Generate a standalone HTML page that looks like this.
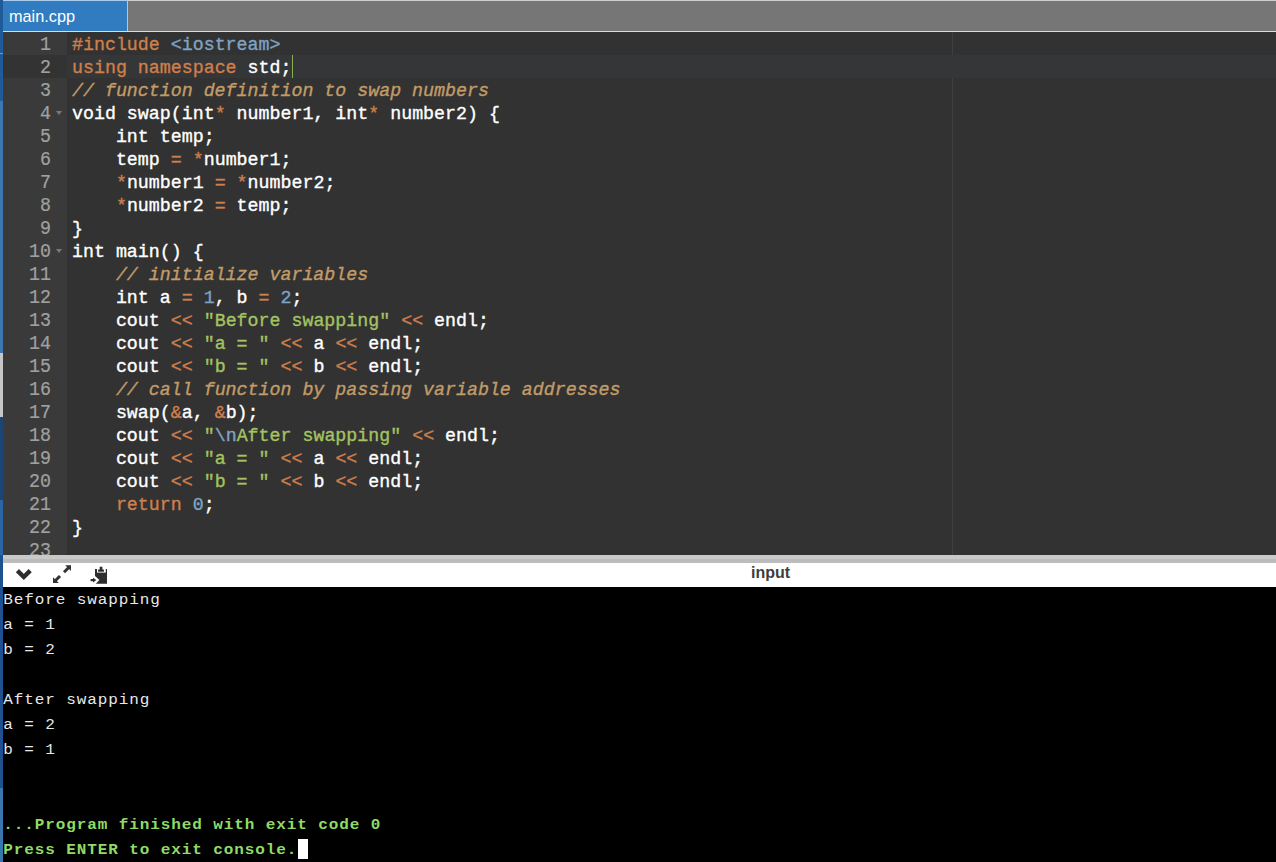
<!DOCTYPE html>
<html><head><meta charset="utf-8"><style>
*{margin:0;padding:0;box-sizing:border-box}
html,body{width:1276px;height:862px;overflow:hidden;background:#000}
body{position:relative;font-family:"Liberation Sans",sans-serif}
#strip{position:absolute;left:0;top:0;width:3px;height:862px;background:linear-gradient(to bottom,#1e5b98 0,#1e5b98 53px,#6a9ccc 53px,#6a9ccc 54px,#1e5b98 54px,#1e5b98 101px,#3c78af 101px,#3c78af 353px,#c6c6c6 353px,#c6c6c6 417px,#1b4674 417px,#1b4674 500px,#2a66a4 500px,#2a66a4 555px,#1f5090 555px,#1f5090 788px,#3a76ae 788px,#3a76ae 862px)}
#topbar{position:absolute;left:3px;top:0;width:1273px;height:32px;background:#767676}
#tline{position:absolute;left:0;top:0;width:1273px;height:1px;background:#cfcfcf}
#bline{position:absolute;left:0;top:31px;width:1273px;height:1px;background:#dcdcdc}
#tab{position:absolute;left:0;top:0;width:124px;height:31px;background:#317bc0;color:#fff;font-size:16.3px;line-height:31px;padding-left:6px;border-top:1px solid #a9cdee}
#tabr{position:absolute;left:124px;top:0;width:1px;height:31px;background:#b9c6d2}
#editor{position:absolute;left:3px;top:32px;width:1273px;height:523px;background:#323232;overflow:hidden}
#gutter{position:absolute;left:0;top:0;width:64px;height:523px;background:#3a3a3a}
.gl{position:absolute;left:0;-webkit-text-stroke:0.2px;transform:scaleY(1.09);transform-origin:0 15.5px;width:64px;height:23px;line-height:23px;text-align:right;padding-right:16px;color:#a0a0a0;font-family:"Liberation Mono",monospace;font-size:18.3px}
.cl{position:absolute;left:69px;-webkit-text-stroke:0.35px;transform:scaleY(1.05);transform-origin:0 15.5px;height:23px;line-height:23px;white-space:pre;color:#fff;font-family:"Liberation Mono",monospace;font-size:18.3px}
.tx{position:absolute;left:0;top:2px;width:1273px;height:523px}
#margin{position:absolute;left:949px;top:0;width:1px;height:523px;background:#3f3f3f}
.active{position:absolute;left:64px;top:23px;width:1209px;height:23px;background:#353637}
.gactive{position:absolute;left:0;top:23px;width:64px;height:23px;background:#333333}
.fold{position:absolute;left:53px;width:0;height:0;border-left:3.5px solid transparent;border-right:3.5px solid transparent;border-top:4px solid #7a7a7a}
#cursor{position:absolute;left:289px;top:23px;width:1px;height:23px;background:#88b050}
.k{color:#cf7f4c}.s{color:#a5c261}.c{color:#c29c68;font-style:italic}.n{color:#7fa3c3}
#split{position:absolute;left:3px;top:555px;width:1273px;height:8px;background:linear-gradient(#c9c9c9 0,#c9c9c9 4px,#bcbcbc 4px)}
#tools{position:absolute;left:3px;top:563px;width:1273px;height:24px;background:#fff}
#inlabel{position:absolute;left:748px;top:-2px;height:24px;line-height:24px;font-weight:bold;font-size:16px;color:#3d3d3d}
#console{position:absolute;left:3px;top:587px;padding-top:1px;width:1273px;height:275px;background:#000;font-family:"Liberation Mono",monospace;font-size:16px;letter-spacing:0.9px;color:#e8e8e8}
.ol{position:absolute;left:0.3px;margin-top:1px;transform:scaleY(0.92);transform-origin:0 16px;height:25px;line-height:25px;white-space:pre}
.g{color:#8fdb66;font-weight:bold}
svg{position:absolute}
</style></head><body>
<div id="strip"></div>
<div id="topbar"><div id="tline"></div><div id="tab">main.cpp</div><div id="tabr"></div><div id="bline"></div></div>
<div id="editor">
<div id="gutter"></div>
<div id="margin"></div>
<div class="gactive"></div>
<div class="active"></div>
<div class="fold" style="top:79px"></div>
<div class="fold" style="top:217px"></div>
<div id="cursor"></div>
<div class="tx">
<div class="gl" style="top:0px">1</div>
<div class="gl" style="top:23px">2</div>
<div class="gl" style="top:46px">3</div>
<div class="gl" style="top:69px">4</div>
<div class="gl" style="top:92px">5</div>
<div class="gl" style="top:115px">6</div>
<div class="gl" style="top:138px">7</div>
<div class="gl" style="top:161px">8</div>
<div class="gl" style="top:184px">9</div>
<div class="gl" style="top:207px">10</div>
<div class="gl" style="top:230px">11</div>
<div class="gl" style="top:253px">12</div>
<div class="gl" style="top:276px">13</div>
<div class="gl" style="top:299px">14</div>
<div class="gl" style="top:322px">15</div>
<div class="gl" style="top:345px">16</div>
<div class="gl" style="top:368px">17</div>
<div class="gl" style="top:391px">18</div>
<div class="gl" style="top:414px">19</div>
<div class="gl" style="top:437px">20</div>
<div class="gl" style="top:460px">21</div>
<div class="gl" style="top:483px">22</div>
<div class="gl" style="top:506px">23</div>
<div class="cl" style="top:0px"><span class="k">#include</span> <span class="n">&lt;iostream&gt;</span></div>
<div class="cl" style="top:23px"><span class="k">using</span> <span class="k">namespace</span> std;</div>
<div class="cl" style="top:46px"><span class="c">// function definition to swap numbers</span></div>
<div class="cl" style="top:69px">void swap(int<span class="k">*</span> number1, int<span class="k">*</span> number2) {</div>
<div class="cl" style="top:92px">    int temp;</div>
<div class="cl" style="top:115px">    temp <span class="k">=</span> <span class="k">*</span>number1;</div>
<div class="cl" style="top:138px">    <span class="k">*</span>number1 <span class="k">=</span> <span class="k">*</span>number2;</div>
<div class="cl" style="top:161px">    <span class="k">*</span>number2 <span class="k">=</span> temp;</div>
<div class="cl" style="top:184px">}</div>
<div class="cl" style="top:207px">int main() {</div>
<div class="cl" style="top:230px">    <span class="c">// initialize variables</span></div>
<div class="cl" style="top:253px">    int a <span class="k">=</span> <span class="n">1</span>, b <span class="k">=</span> <span class="n">2</span>;</div>
<div class="cl" style="top:276px">    cout <span class="k">&lt;&lt;</span> <span class="s">"Before swapping"</span> <span class="k">&lt;&lt;</span> endl;</div>
<div class="cl" style="top:299px">    cout <span class="k">&lt;&lt;</span> <span class="s">"a = "</span> <span class="k">&lt;&lt;</span> a <span class="k">&lt;&lt;</span> endl;</div>
<div class="cl" style="top:322px">    cout <span class="k">&lt;&lt;</span> <span class="s">"b = "</span> <span class="k">&lt;&lt;</span> b <span class="k">&lt;&lt;</span> endl;</div>
<div class="cl" style="top:345px">    <span class="c">// call function by passing variable addresses</span></div>
<div class="cl" style="top:368px">    swap(<span class="k">&amp;</span>a, <span class="k">&amp;</span>b);</div>
<div class="cl" style="top:391px">    cout <span class="k">&lt;&lt;</span> <span class="s">"<span class="n">\n</span>After swapping"</span> <span class="k">&lt;&lt;</span> endl;</div>
<div class="cl" style="top:414px">    cout <span class="k">&lt;&lt;</span> <span class="s">"a = "</span> <span class="k">&lt;&lt;</span> a <span class="k">&lt;&lt;</span> endl;</div>
<div class="cl" style="top:437px">    cout <span class="k">&lt;&lt;</span> <span class="s">"b = "</span> <span class="k">&lt;&lt;</span> b <span class="k">&lt;&lt;</span> endl;</div>
<div class="cl" style="top:460px">    <span class="k">return</span> <span class="n">0</span>;</div>
<div class="cl" style="top:483px">}</div>
<div class="cl" style="top:506px"></div>
</div>
</div>
<div id="split"></div>
<div id="tools">
<svg style="left:-3px;top:-8px" width="130" height="32" viewBox="0 555 130 32">
<path d="M17.4 570.6 L23.8 577 L30.2 570.6" fill="none" stroke="#2e2e2e" stroke-width="4.4"/>
<path d="M65.2 565.2 L71 565.2 L71 571 Z" fill="#333"/>
<path d="M68.5 567.8 L64 572.3" stroke="#333" stroke-width="3"/>
<path d="M53 583 L53 577.2 L58.8 583 Z" fill="#333"/>
<path d="M55.5 580.5 L60 576" stroke="#333" stroke-width="3"/>
<path d="M95 569 H107 V583.8 H95.8 L99.4 580.1 L95 575.9 Z" fill="#2e2e2e"/>
<path d="M97 568.5 H105.8 V572.6 H97 Z" fill="#fff"/>
<path d="M98.1 569.6 H103.9 V571.8 H98.1 Z M99.7 566.7 H102.4 V569.8 H99.7 Z" fill="#2e2e2e"/>
<path d="M90.6 580.1 H94" stroke="#2e2e2e" stroke-width="2.2"/>
<path d="M93 577.8 L96.3 580.1 L93 582.4 Z" fill="#2e2e2e"/>
</svg>
<div id="inlabel">input</div></div>
<div id="console">
<div class="ol" style="top:0px">Before swapping</div>
<div class="ol" style="top:25px">a = 1</div>
<div class="ol" style="top:50px">b = 2</div>
<div class="ol" style="top:100px">After swapping</div>
<div class="ol" style="top:125px">a = 2</div>
<div class="ol" style="top:150px">b = 1</div>
<div class="ol g" style="top:225px">...Program finished with exit code 0</div>
<div class="ol g" style="top:250px">Press ENTER to exit console.</div>
<div id="ccur" style="position:absolute;left:295px;top:252px;width:10px;height:20px;background:#fff"></div>
</div>
</body></html>
